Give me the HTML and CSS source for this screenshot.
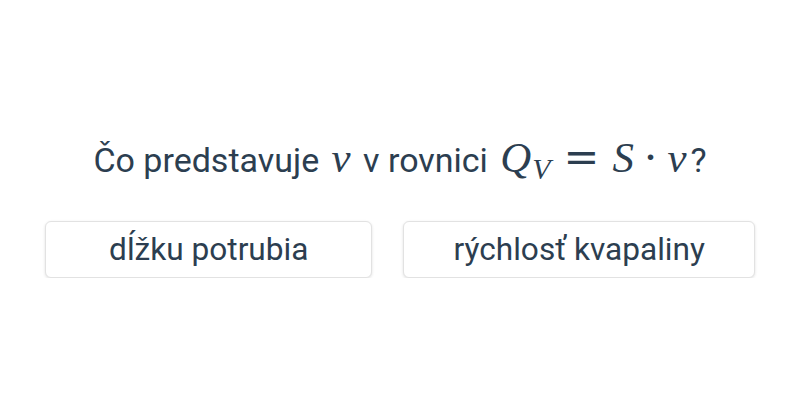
FILE: index.html
```html
<!DOCTYPE html>
<html lang="sk">
<head>
<meta charset="UTF-8" />
<meta name="viewport" content="width=device-width, initial-scale=1" />
<title>Otázka</title>
<link rel="stylesheet" href="styles.css">
</head>
<body>

<div class="quiz">
  <h2 class="question">
    Čo predstavuje <span class="math"><i>v</i></span> v rovnici
    <span class="math"><i>Q</i><sub><i>V</i></sub><span class="op">=</span><i>S</i><span class="dot">·</span><i>v</i></span>?
  </h2>

  <div class="answers">
    <button class="answer answer-a">dĺžku potrubia</button>
    <button class="answer answer-b">rýchlosť kvapaliny</button>
  </div>
</div>

</body>
</html>
```

FILE: styles.css
```css
body {
  margin: 0;
  font-family: Roboto, "Liberation Sans", sans-serif;
  background: #fff;
  color: #2c3e50;
}
.quiz {
  width: 710px;
  margin: 0 auto;
  padding-top: 136px;
}
.question {
  margin: 0 0 37px;
  font-size: 34px;
  font-weight: 400;
  text-align: center;
  color: #2c3e50;
}
.math {
  font-family: "Liberation Serif", serif;
  font-size: 1.26em;
  line-height: 1;
  margin: 0 4px;
}
.math sub {
  font-size: 0.7em;
  vertical-align: -0.25em;
  margin-left: 1px;
}
.math .op,
.math .dot {
  font-family: "DejaVu Serif", serif;
}
.math .op {
  margin: 0 13px;
}
.math .dot {
  margin: 0 10px;
}
.answers {
  display: grid;
  grid-template-columns: 327fr 351fr;
  gap: 31px;
}
.answer {
  height: 57px;
  background: #fff;
  border: 1px solid #e2e2e2;
  border-radius: 6px;
  box-shadow: 0 1px 3px rgba(0, 0, 0, 0.12);
  font-family: inherit;
  font-size: 31.6px;
  color: #2c3e50;
  cursor: pointer;
}
```
